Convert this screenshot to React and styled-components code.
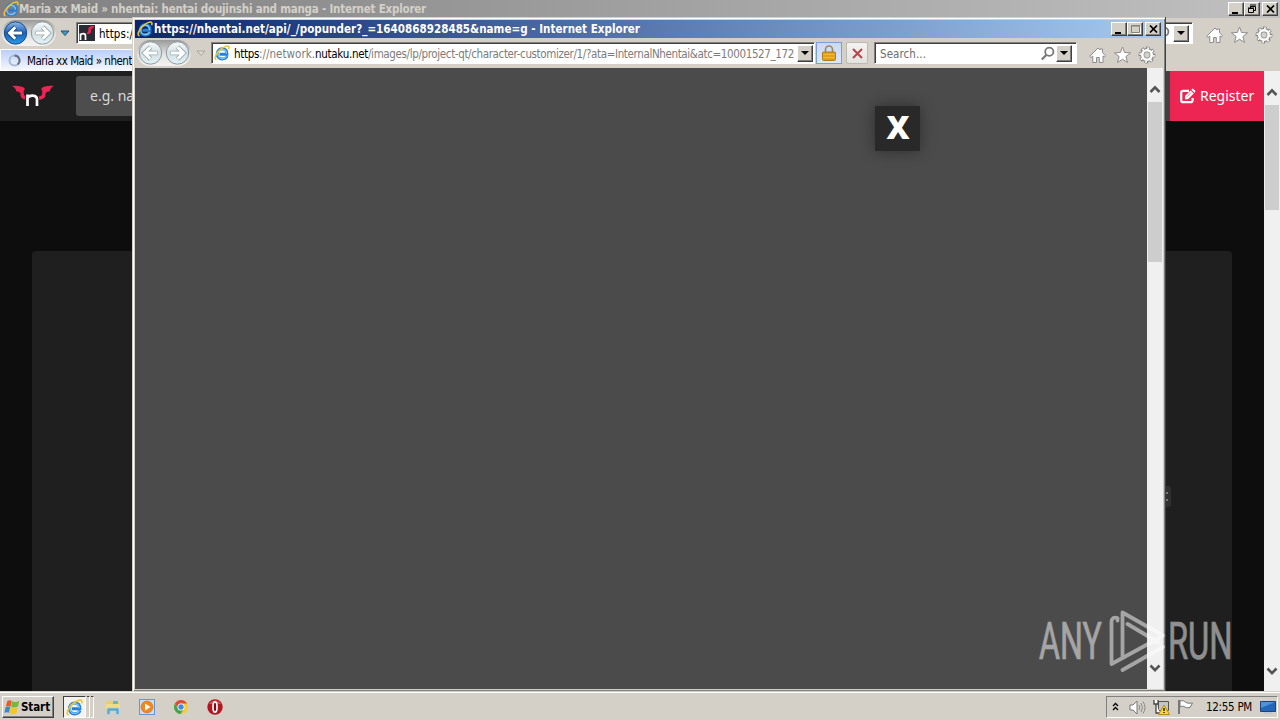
import React, { useLayoutEffect, useRef } from "react";
import styled, { createGlobalStyle, css } from "styled-components";

const Global = createGlobalStyle`
  * { box-sizing: border-box; }
  html, body { margin: 0; width: 1280px; height: 720px; overflow: hidden; background: #0d0d0d; }
  body { font: 11.5px/14px "DejaVu Sans Condensed", "DejaVu Sans", sans-serif; color: #000; }
  svg { display: block; flex: none; }
`;

/* Text run whose tracking is adjusted to fill a given width. */
const Run = styled.span`
  display: inline-block;
  white-space: pre;
  flex: none;
  color: ${(p) => p.$color || "inherit"};
  font-weight: ${(p) => (p.$bold ? 700 : 400)};
  padding-top: ${(p) => p.$drop || 0}px;
`;
function Tracked({ width, children, ...rest }) {
  const ref = useRef(null);
  useLayoutEffect(() => {
    const el = ref.current;
    el.style.letterSpacing = "0px";
    const natural = el.getBoundingClientRect().width;
    el.style.letterSpacing = `${(width - natural) / el.textContent.length}px`;
  }, [width]);
  return <Run ref={ref} {...rest}>{children}</Run>;
}

const Screen = styled.div`
  position: relative;
  width: 1280px;
  height: 720px;
  display: flex;
  flex-direction: column;
  overflow: hidden;
`;
const Browser = styled.main`
  height: 691px;
  display: flex;
  flex-direction: column;
`;
const TitleBar = styled.header`
  height: 18px;
  flex: none;
  display: flex;
  align-items: center;
  padding: 0 2px 0 ${(p) => (p.$active ? 2 : 3)}px;
  color: ${(p) => (p.$active ? "#fff" : "#d4d0c8")};
  background: ${(p) => (p.$active ? "linear-gradient(90deg,#0c256c,#a6caf0)" : "linear-gradient(90deg,#808080,#c0c0c0)")};
`;
const Spacer = styled.div`flex: 1;`;
const raised = css`
  background: #d4d0c8;
  border: 1px solid;
  border-color: #fff #404040 #404040 #fff;
  box-shadow: inset -1px -1px #808080;
`;
const CaptionButton = styled.div`
  ${raised}
  width: 16px;
  height: 14px;
  margin-left: ${(p) => p.$gap || 0}px;
  display: grid;
  place-items: center;
`;
const Toolbar = styled.div`
  height: 30px;
  flex: none;
  display: flex;
  align-items: center;
  background: #d4d0c8;
`;
const NavPair = styled.div`
  display: flex;
  height: 26px;
  width: 54px;
  margin-left: ${(p) => p.$left}px;
  padding: 1px;
  gap: 2px;
  border-radius: 13px;
  background: linear-gradient(#9a9a9a, #e4e2df 55%, #f4f3f1);
`;
const AddressBox = styled.div`
  height: 22px;
  width: ${(p) => p.$w}px;
  flex: none;
  display: flex;
  align-items: center;
  background: #fff;
  border: 1px solid;
  border-color: #808080 #fff #fff #808080;
  box-shadow: inset 1px 1px #404040;
  padding: 1px 1px 1px ${(p) => p.$pad}px;
  overflow: hidden;
`;
const DropButton = styled.div`
  ${raised}
  width: 16px;
  height: 17px;
  flex: none;
  display: grid;
  place-items: center;
`;
const LockButton = styled.div`
  width: 26px;
  height: 22px;
  margin-left: 1px;
  display: grid;
  place-items: center;
  background: linear-gradient(#c6dafa, #dce8ff);
  border: 1px solid #7a9edc;
`;
const StopButton = styled.div`
  width: 22px;
  height: 22px;
  margin: 0 6px 0 4px;
  display: grid;
  place-items: center;
  background: linear-gradient(#f4f3f2, #e4e2de);
  border: 1px solid #bdb9b2;
  border-radius: 2px;
`;
const Tools = styled.div`
  display: flex;
  gap: 7px;
  margin: 4px 7px 0 0;
`;
const TabStrip = styled.div`
  height: 23px;
  flex: none;
  background: #d4d0c8;
  padding-top: 1px;
`;
const Tab = styled.div`
  width: 230px;
  height: 22px;
  display: flex;
  align-items: center;
  gap: 6px;
  padding-left: 7px;
  border: 1px solid #fff;
  background: linear-gradient(#b9cffb, #f2f5fd 95%);
`;
const Viewport = styled.div`
  flex: 1;
  min-height: 0;
  display: flex;
`;
const Page = styled.div`
  flex: 1;
  background: #0d0d0d;
  display: flex;
  flex-direction: column;
`;
const SiteNav = styled.nav`
  height: 50px;
  flex: none;
  display: flex;
  align-items: center;
  background: #1f1f1f;
  font: 14px "Noto Sans", sans-serif;
`;
const SearchField = styled.div`
  width: 400px;
  height: 40px;
  margin-left: 21px;
  padding: 0 0 2px 14px;
  display: flex;
  align-items: center;
  border-radius: 3px;
  background: #4d4d4d;
  color: #d9d9d9;
`;
const Register = styled.div`
  width: 94px;
  height: 50px;
  padding: 0 0 1px 10px;
  display: flex;
  align-items: center;
  gap: 4px;
  background: #ed2553;
  color: #fff;
`;
const NavEdge = styled.div`
  width: 5px;
  height: 50px;
  background: #404040;
`;
const Gallery = styled.section`
  margin: 130px 32px 0;
  flex: 1;
  background: #1f1f1f;
  border-radius: 4px 4px 0 0;
`;
const Track = styled.aside`
  width: 16px;
  flex: none;
  display: flex;
  flex-direction: column;
  align-items: center;
  background: #f0f0f0;
  padding: ${(p) => p.$top}px 0 ${(p) => p.$bottom}px;
`;
const Thumb = styled.div`
  width: 14px;
  height: ${(p) => p.$h}px;
  margin-top: ${(p) => p.$gap}px;
  background: #cdcdcd;
`;
const Popup = styled.section`
  position: absolute;
  left: 132px;
  top: 17px;
  width: 1034px;
  height: 674px;
  display: flex;
  flex-direction: column;
  background: #d4d0c8;
  border-right: 1px solid #404040;
  box-shadow: inset 1px 1px #d4d0c8, inset 2px 2px #fff, inset -1px -1px #808080;
  padding: 3px 2px 2px 3px;
`;
const DarkPage = styled.div`
  flex: 1;
  background: #4b4b4b;
  display: flex;
  justify-content: flex-end;
  padding: 38px 227px 0 0;
`;
const CloseTile = styled.button`
  width: 45px;
  height: 45px;
  padding: 0 0 3px 1px;
  border: 0;
  display: grid;
  place-items: center;
  background: #292929;
  color: #fff;
  box-shadow: 0 0 15px rgba(0, 0, 0, 0.38);
  font: 800 32px/42px "Open Sans", sans-serif;
`;
const Grip = styled.div`
  position: absolute;
  left: 1166px;
  top: 486px;
  width: 5px;
  height: 21px;
  background: #303030;
  border-radius: 0 3px 3px 0;
  display: flex;
  flex-direction: column;
  justify-content: center;
  align-items: flex-start;
  gap: 5px;
`;
const Dot = styled.i`
  width: 2px;
  height: 2px;
  background: #777;
`;
const Watermark = styled.div`
  position: absolute;
  left: 1036px;
  top: 606px;
  opacity: 0.5;
`;
const Taskbar = styled.footer`
  height: 29px;
  display: flex;
  align-items: center;
  background: #d4d0c8;
  border-top: 1px solid #d4d0c8;
  box-shadow: inset 0 1px #fff;
  padding: 3px 2px 1px;
`;
const Start = styled.div`
  ${raised}
  width: 52px;
  height: 22px;
  display: flex;
  align-items: center;
`;
const ActiveTask = styled.div`
  width: 23px;
  height: 22px;
  margin-left: 9px;
  display: grid;
  place-items: center;
  background: #f4f2ee;
  border: 1px solid;
  border-color: #404040 #fff #fff #404040;
`;
const Stack = styled.div`
  width: 3px;
  height: 22px;
  border-top: 1px solid #404040;
  border-right: 1px solid #fff;
  border-bottom: 1px solid #fff;
  margin-left: 1px;
`;
const Launchers = styled.div`
  display: flex;
  align-items: center;
  gap: 18px;
  margin-left: 11px;
`;
const Tray = styled.div`
  width: 172px;
  height: 22px;
  display: flex;
  align-items: center;
  border: 1px solid;
  border-color: #808080 #fff #fff #808080;
  padding-left: 5px;
`;
const TraySlot = styled.div`
  width: ${(p) => p.$w}px;
  flex: none;
`;

const IeMark = ({ size = 16 }) => (
  <svg width={size} height={size} viewBox="0 0 16 16" fill="none">
    <path d="M13.200 11C12.200 13.200 10.400 14 8.200 14c-3 0-5-2.200-5-5s2.100-5.200 5-5.200c3 0 4.800 2.100 4.800 5.400H5.500" stroke="#2b7fd0" strokeWidth="2.900" />
    <path d="M12.400 11C11.500 12.800 10.200 13.500 8.200 13.500c-2.500 0-4.400-2-4.400-4.600 0-2.700 1.800-4.500 4.400-4.500 2.600 0 4.200 1.800 4.200 4.300" stroke="#7accf8" strokeWidth="1.300" />
    <path d="M2.600 14.800C-.8 14.500 2.100 8 6.900 4.200 11.700.3 16.400-.2 14.600 4.200" stroke="#efc62e" strokeWidth="1.500" />
  </svg>
);
const Orb = ({ active, flip }) => (
  <svg width="25" height="24" viewBox="0 0 25 24">
    <defs>
      <linearGradient id={active ? "orbBlue" : "orbPale"} x1="0" y1="0" x2="0" y2="1">
        <stop offset="0" stopColor={active ? "#8eb9e8" : "#f8fbfc"} />
        <stop offset=".5" stopColor={active ? "#1c62b7" : "#d3dfe3"} />
        <stop offset="1" stopColor={active ? "#2a9ae8" : "#e3f3f7"} />
      </linearGradient>
    </defs>
    <circle cx="12.5" cy="12" r="11.2" fill={`url(#${active ? "orbBlue" : "orbPale"})`} stroke={active ? "#17498d" : "#8c999e"} />
    <g transform={flip ? "translate(25 0) scale(-1 1)" : undefined}>
      <path d="M19.500 12H7.5M12.500 6 6.500 12l6 6" fill="none" stroke={active ? "#153f77" : "#9aaab0"} strokeWidth="4.6" />
      <path d="M19 12H7.5M12.300 6.300 6.600 12l5.700 5.700" fill="none" stroke="#fff" strokeWidth="3" />
    </g>
  </svg>
);
const HistoryArrow = ({ active }) => (
  <svg width="10" height="7" viewBox="0 0 10 7">
    <path d="M1 1h8L5 5.500z" fill={active ? "#3f9bc5" : "#dedbd5"} stroke={active ? "#264d69" : "#aaa69f"} />
  </svg>
);
const BlackArrow = () => <svg width="8" height="4" viewBox="0 0 8 4"><path d="M0 0h8L4 4z" /></svg>;
const Lens = () => (
  <svg width="15" height="15" viewBox="0 0 15 15" fill="none" stroke="#777" strokeWidth="1.8">
    <circle cx="9.300" cy="5.7" r="4.1" /><path d="m6.300 8.9-4.5 4.6" strokeWidth="2.2" />
  </svg>
);
const House = () => (
  <svg width="18" height="18" viewBox="0 0 18 18" fill="#fff" stroke="#8c8c8c">
    <path d="M1.700 10.300 10 2l2 2V3h2.500v3.600l3 3.200-1.200 1.300-1.300-1.200v6.600h-3.700v-5H8.500v5H4.800V10L3 11.500z" />
  </svg>
);
const Star = () => (
  <svg width="18" height="18" viewBox="0 0 18 18" fill="#fff" stroke="#8c8c8c">
    <path d="m9.500 1 2.100 5.500 6 .3-4.700 3.700 1.600 6L9.500 13.200l-5 3.300 1.600-6L1.400 6.800l6-.3z" />
  </svg>
);
const Gear = () => (
  <svg width="18" height="18" viewBox="0 0 18 18">
    <g fill="none" stroke="#858585">
      <g transform="rotate(-9 9 9)"><circle cx="9" cy="9" r="6.700" strokeWidth="3.400" strokeDasharray="3.260 2" /></g>
      <circle cx="9" cy="9" r="4.800" strokeWidth="4.200" />
      <circle cx="9" cy="9" r="6.700" stroke="#fff" strokeWidth="2" strokeDasharray="1.700 3.560" />
      <circle cx="9" cy="9" r="4.700" stroke="#fff" strokeWidth="2.600" />
    </g>
  </svg>
);
const ToolIcons = () => <Tools><House /><Star /><Gear /></Tools>;

const CaptionSet = ({ restored }) => (
  <>
    <CaptionButton><svg width="10" height="10"><path d="M1 8h6v2H1z" /></svg></CaptionButton>
    <CaptionButton>
      {restored ? (
        <svg width="10" height="10" viewBox="0 0 10 10" fill="none" stroke="#000"><path d="M3 1h6M3.5 2.5h5v4h-2M3.5 2v2M1 4h6M1.5 4.5h5v4h-5z" /></svg>
      ) : (
        <svg width="11" height="10" viewBox="0 0 11 10" fill="none" stroke="#85817a"><path d="M1.5 1.5h8v7h-8zM1 2h9" /><path d="M2.5 9.5h8v-7" stroke="#fff" /></svg>
      )}
    </CaptionButton>
    <CaptionButton $gap={2}><svg width="9" height="8" viewBox="0 0 9 8" stroke="#000" strokeWidth="1.7"><path d="m1 .5 7 7M8 .5l-7 7" /></svg></CaptionButton>
  </>
);
const Chevron = ({ down }) => (
  <svg width="12" height="9" viewBox="0 0 12 9">
    <path d={down ? "m1.5 1.5 4.5 4.7 4.5-4.7" : "m1.5 7 4.5-4.7L10.500 7"} fill="none" stroke="#555" strokeWidth="2.6" />
  </svg>
);
const Scrollbar = ({ top, gap, h, bottom }) => (
  <Track $top={top} $bottom={bottom}>
    <Chevron /><Thumb $h={h} $gap={gap} /><Spacer /><Chevron down />
  </Track>
);

const SiteLogo = () => (
  <svg width="55" height="34" viewBox="0 0 55 34">
    <path d="M12 7c5-.4 10.500-.2 13 3-1.500 1-1.800 3.200-.7 6.400l3.500 1.400-.5 3c-4.500-.1-7.500-2.500-6.700-6.300-1.100-1.800-2.800-2.200-4.300-2C16 10 14.500 8.200 12 7zM54 7c-5-.4-10.500-.2-13 3 1.500 1 1.800 3.200.7 6.400l-3.500 1.400.5 3c4.500-.1 7.500-2.500 6.700-6.300 1.100-1.800 2.800-2.200 4.300-2C50 10 51.500 8.200 54 7z" fill="#ed2553" />
    <path d="M27.500 27V15.500M27.500 19c1.500-3 9.500-3.800 9.500 1.500V27" fill="none" stroke="#1f1f1f" strokeWidth="4.500" />
    <path d="M27.500 27V15.500M27.500 19c1.500-3 9.500-3.800 9.500 1.500V27" fill="none" stroke="#fff" strokeWidth="2.700" />
  </svg>
);
const Favicon = () => (
  <svg width="16" height="16" viewBox="0 0 16 16">
    <rect width="16" height="16" fill="#2a2c35" />
    <path d="M15.500 1C11 .5 8.500 2.500 9.500 5.500L7.500 9c4 .4 5-1.300 4.400-4 .5-1.300 2-1.600 3.600-4z" fill="#ed2553" />
    <path d="M1.500 15V8.500M1.500 10.500C2.500 8 6.500 8 6.500 11v4" fill="none" stroke="#fff" strokeWidth="1.700" />
  </svg>
);
const Edit = () => (
  <svg width="16" height="16" viewBox="0 0 16 16">
    <path d="M9 2.800H3.200Q1.200 2.800 1.200 4.800v7.400q0 2 2 2h7.400q2 0 2-2V10" fill="none" stroke="#fff" strokeWidth="2.200" />
    <path d="M5 11.200V8l5.600-5.600 3.100 3.100L8 11.200zM11.300 1.700l.8-.8q.6-.6 1.300 0l1.700 1.700q.7.700 0 1.300l-.8.800z" fill="#fff" />
    <path d="M6.800 8.900 11 4.700" stroke="#ed2553" strokeWidth=".6" />
  </svg>
);
const Spinner = () => (
  <svg width="13" height="13" viewBox="0 0 13 13" fill="none" strokeWidth="2">
    <circle cx="6.500" cy="6.500" r="5" stroke="#a9bad2" /><path d="M6.500 1.500a5 5 0 0 1 3 9" stroke="#66717f" />
  </svg>
);
const Lock = () => (
  <svg width="14" height="16" viewBox="0 0 14 16">
    <path d="M3.500 8V4.500a3.500 3.500 0 0 1 7 0V8" fill="none" stroke="#9c8650" strokeWidth="1.600" />
    <rect x=".5" y="7" width="13" height="8.500" rx="1" fill="#e0a01c" stroke="#b27a1a" />
    <path d="M1 9.500h12M1 12.500h12" stroke="#f2c14a" strokeWidth=".8" />
  </svg>
);
const Cross = () => (
  <svg width="11" height="11" viewBox="0 0 11 11"><path d="m1 1 9 9M10 1l-9 9" stroke="#b5444b" strokeWidth="2" /></svg>
);
const WindowsFlag = () => (
  <svg width="18" height="16" viewBox="0 0 17 16">
    <path d="M3.800 2C5.500.9 7 1.100 8.300 1.900L7 7.500C5.600 6.800 4.200 6.700 2.400 7.500z" fill="#e85a29" />
    <path d="M8.800 2.200c1.900 1.100 4 1.200 7-.2L14.500 7.600c-2.500 1-4.500 1.200-7 .2z" fill="#74b93e" />
    <path d="M2.200 8.100c1.700-.9 3.200-.8 4.600 0l-1.400 5.700c-1.400-.8-2.800-.8-4.600 0z" fill="#3389d4" />
    <path d="M7.300 8.600c2.400 1 4.600.9 7-.2l-1.400 5.800c-2.400 1-4.600 1.100-7 .1z" fill="#f5c526" />
  </svg>
);
const Folder = () => (
  <svg width="16" height="16" viewBox="0 0 16 16">
    <path d="M1 3V2h5l1 1h7v4h1v6H1z" fill="#e6cf6d" /><path d="M8 2h5v3H8z" fill="#70b7b0" />
    <path d="M1 5h14v6H1z" fill="#f0dc86" /><path d="M2 15.500V10q0-1 1-1h10q1 0 1 1v5.500h-3v-3.500H5v3.500z" fill="#58a6d2" stroke="#a9d9ee" strokeWidth=".7" />
  </svg>
);
const Player = () => (
  <svg width="16" height="16" viewBox="0 0 16 16">
    <rect x=".5" y=".5" width="15" height="15" fill="#c5dff4" stroke="#5f9bd0" />
    <circle cx="8" cy="8" r="6" fill="#f3871d" stroke="#d96a15" strokeWidth=".6" /><path d="m6 4.500 5.500 3.500L6 11.500z" fill="#fff" />
  </svg>
);
const Chrome = () => (
  <svg width="16" height="16" viewBox="0 0 16 16">
    <circle cx="8" cy="8" r="7" fill="#f7cc2f" />
    <path d="M1.900 4.500A7 7 0 0 1 14.100 4.500H8A3.500 3.500 0 0 0 5 9.700z" fill="#e04a3c" />
    <path d="M1.900 4.500A7 7 0 0 0 7.600 15L11 9.800A3.500 3.500 0 0 1 5 9.700z" fill="#3fa655" />
    <circle cx="8" cy="8" r="3.500" fill="#fff" /><circle cx="8" cy="8" r="2.700" fill="#4788e7" />
  </svg>
);
const Opera = () => (
  <svg width="16" height="16" viewBox="0 0 16 16">
    <circle cx="8" cy="8" r="7.700" fill="#b31620" /><path d="M2 5a7 7 0 0 1 12 0z" fill="#d05558" /><ellipse cx="8" cy="8" rx="2" ry="5.200" fill="#7e0a15" stroke="#fff" strokeWidth="1.700" />
  </svg>
);
const Speaker = () => (
  <svg width="17" height="15" viewBox="0 0 17 15" fill="none">
    <path d="M1 5h3l4-4v13l-4-4H1z" fill="#fff" stroke="#777" /><path d="M10 5q1.500 2.500 0 5M12 3q3 4.500 0 9M14 1.500q4 6 0 12" stroke="#888" />
  </svg>
);
const Network = () => (
  <svg width="17" height="16" viewBox="0 0 17 16">
    <path d="M5.500 2.500h10v9h-10z" fill="#c5c5c5" stroke="#555" /><path d="M1 1v4h4V1M3 5v9h4" stroke="#444" strokeWidth="1.300" fill="#fff" />
    <path d="m11 6 5.500 9.500h-11z" fill="#ffda28" stroke="#b98b10" /><path d="M11 9v3M11 13v1" stroke="#000" strokeWidth="1.300" />
  </svg>
);
const Flag = () => (
  <svg width="17" height="16" viewBox="0 0 17 16">
    <path d="M2 1v14" stroke="#777" strokeWidth="2" /><path d="M3 2c3-1 4 0 6 1.500 2 1 4 .8 6.500.5L13 8.500c-3 1-5-.5-6-1S4.500 7 3 8z" fill="#fff" stroke="#777" />
  </svg>
);
const Desktop = () => (
  <svg width="16" height="14" viewBox="0 0 16 14">
    <path d="M.5 1.500h15v10H.5z" fill="#2467b8" stroke="#1c427f" /><path d="M1 2h14L1 8z" fill="#4b93dc" /><path d="M4 13h8" stroke="#bfc7d0" strokeWidth="2" />
  </svg>
);

const MarkRow = styled.div`
  display: flex;
  align-items: center;
`;
/* Condensed lettering: Roboto squeezed horizontally. */
const MarkWord = styled.span`
  width: ${(p) => p.$w}px;
  height: 68px;
  flex: none;
  color: #fff;
  font: 400 51px/72px Roboto, sans-serif;
  white-space: nowrap;
  transform: scaleX(${(p) => p.$squeeze});
  transform-origin: 0 50%;
  -webkit-text-stroke: 0.7px #fff;
`;
const Emblem = () => (
  <svg width="60" height="68" viewBox="72 0 60 68">
    <path d="M81.500 14.500V12q-6-1.500-6 4v42l48.500-26.500M86.500 50V6.500L127 29.500M91.500 18l31 18.500M86.500 64 127 41" fill="none" stroke="#fff" strokeWidth="3.800" strokeLinejoin="round" strokeLinecap="round" />
  </svg>
);
const AnyRun = () => (
  <MarkRow>
    <TraySlot $w={3} />
    <MarkWord $w={69} $squeeze={0.63}>ANY</MarkWord>
    <Emblem />
    <MarkWord $w={64} $squeeze={0.64}>RUN</MarkWord>
  </MarkRow>
);

export default function App() {
  return (
    <Screen>
      <Global />
      <Browser>
        <TitleBar>
          <IeMark />
          <Tracked width={407} $bold>Maria xx Maid » nhentai: hentai doujinshi and manga - Internet Explorer</Tracked>
          <Spacer />
          <CaptionSet restored />
        </TitleBar>
        <Toolbar>
          <NavPair $left={2}><Orb active /><Orb flip /></NavPair>
          <TraySlot $w={4} /><HistoryArrow active /><TraySlot $w={6} />
          <AddressBox $w={700} $pad={2}>
            <Favicon /><TraySlot $w={4} /><Tracked width={34} $drop={2}>https:/</Tracked>
          </AddressBox>
          <Spacer />
          <AddressBox $w={200} $pad={161}><Lens /><TraySlot $w={3} /><DropButton><BlackArrow /></DropButton></AddressBox>
          <TraySlot $w={12} />
          <ToolIcons />
        </Toolbar>
        <TabStrip>
          <Tab><Spinner /><Tracked width={105} $drop={1}>Maria xx Maid » nhent</Tracked></Tab>
        </TabStrip>
        <Viewport>
          <Page>
            <SiteNav>
              <SiteLogo />
              <SearchField>e.g. na</SearchField>
              <Spacer />
              <NavEdge />
              <Register><Edit /><span>Register</span></Register>
            </SiteNav>
            <Gallery />
          </Page>
          <Scrollbar top={17} gap={8} h={105} bottom={15} />
        </Viewport>
      </Browser>

      <Taskbar>
        <Start><WindowsFlag /><Tracked width={29} $bold>Start</Tracked></Start>
        <ActiveTask><IeMark size={17} /></ActiveTask>
        <Stack /><Stack />
        <Launchers><Folder /><Player /><Chrome /><Opera /></Launchers>
        <Spacer />
        <Tray>
          <TraySlot $w={17}><svg width="8" height="10" viewBox="0 0 8 10" fill="none" stroke="#000" strokeWidth="1.300"><path d="m1 4 2.500-2.500L6 4M1 8l2.500-2.500L6 8" /></svg></TraySlot>
          <TraySlot $w={24}><Speaker /></TraySlot>
          <TraySlot $w={24}><Network /></TraySlot>
          <TraySlot $w={29}><Flag /></TraySlot>
          <TraySlot $w={54}><Tracked width={46}>12:55 PM</Tracked></TraySlot>
          <Desktop />
        </Tray>
      </Taskbar>

      <Popup>
        <TitleBar $active>
          <IeMark />
          <TraySlot $w={1} />
          <Tracked width={486} $bold>https://nhentai.net/api/_/popunder?_=1640868928485&amp;name=g - Internet Explorer</Tracked>
          <Spacer />
          <CaptionSet />
        </TitleBar>
        <Toolbar>
          <NavPair $left={2}><Orb /><Orb flip /></NavPair>
          <TraySlot $w={5} /><HistoryArrow /><TraySlot $w={5} />
          <AddressBox $w={604} $pad={2}>
            <IeMark /><TraySlot $w={4} />
            <Tracked width={25} $drop={2}>https</Tracked>
            <Tracked width={56} $drop={2} $color="#7c7c7c">://network.</Tracked>
            <Tracked width={53} $drop={2}>nutaku.net</Tracked>
            <Tracked width={426} $drop={2} $color="#7c7c7c">/images/lp/project-qt/character-customizer/1/?ata=InternalNhentai&amp;atc=10001527_172</Tracked>
            <Spacer /><DropButton><BlackArrow /></DropButton>
          </AddressBox>
          <LockButton><Lock /></LockButton>
          <StopButton><Cross /></StopButton>
          <AddressBox $w={203} $pad={5}>
            <Tracked width={46} $drop={2} $color="#6c6c6c">Search...</Tracked>
            <Spacer /><Lens /><TraySlot $w={1} /><DropButton><BlackArrow /></DropButton><TraySlot $w={3} />
          </AddressBox>
          <Spacer />
          <ToolIcons />
        </Toolbar>
        <Viewport>
          <DarkPage><CloseTile>X</CloseTile></DarkPage>
          <Scrollbar top={17} gap={8} h={160} bottom={16} />
        </Viewport>
      </Popup>
      <Grip><Dot /><Dot /></Grip>
      <Watermark><AnyRun /></Watermark>
    </Screen>
  );
}
